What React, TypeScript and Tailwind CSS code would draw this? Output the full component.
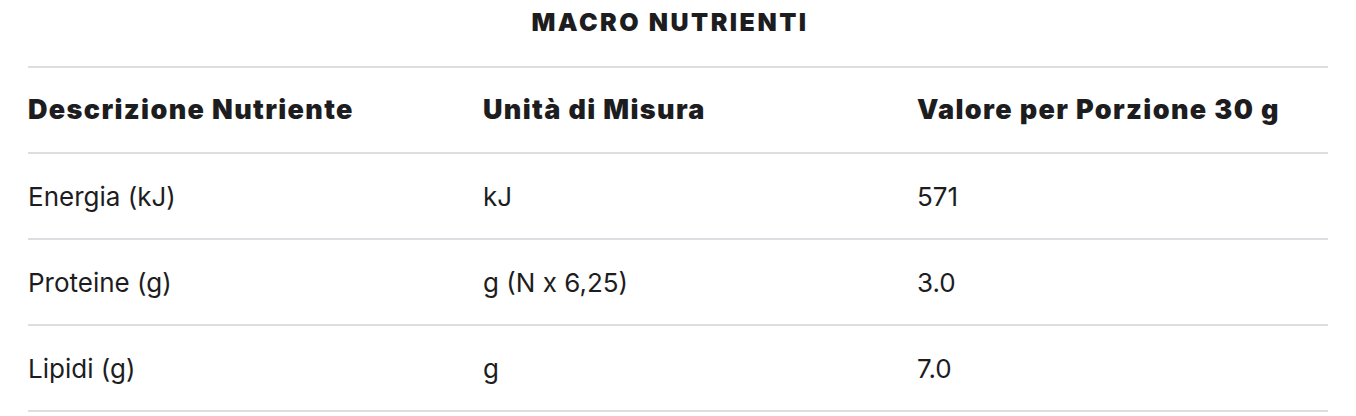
const rows = [
  { name: 'Energia (kJ)', unit: 'kJ', value: '571' },
  { name: 'Proteine (g)', unit: 'g (N x 6,25)', value: '3.0' },
  { name: 'Lipidi (g)', unit: 'g', value: '7.0' },
];

export default function App() {
  return (
    <div
      className="w-[1356px] h-[416px] bg-white text-[#1d1d1f] overflow-hidden"
      style={{ fontFamily: 'Inter, "Noto Sans", sans-serif' }}
    >
      {/* title */}
      <h2 className="pt-[6px] pr-[16px] h-[66px] text-center text-[25px] leading-8 font-black tracking-[0.1em]">
        MACRO NUTRIENTI
      </h2>

      {/* table */}
      <div className="mx-[28px] border-t-2 border-[#dddde2]">
        <div className="grid grid-cols-[455px_434px_1fr] h-[86px] items-center border-b-2 border-[#dddde2] text-[27px] font-black tracking-[0.05em]">
          <div>Descrizione Nutriente</div>
          <div>Unità di Misura</div>
          <div>Valore per Porzione 30 g</div>
        </div>
        {rows.map(r => (
          <div
            key={r.name}
            className="grid grid-cols-[455px_434px_1fr] h-[86px] items-center border-b-2 border-[#dddde2] text-[26px]"
          >
            <div>{r.name}</div>
            <div>{r.unit}</div>
            <div>{r.value}</div>
          </div>
        ))}
      </div>
    </div>
  );
}
